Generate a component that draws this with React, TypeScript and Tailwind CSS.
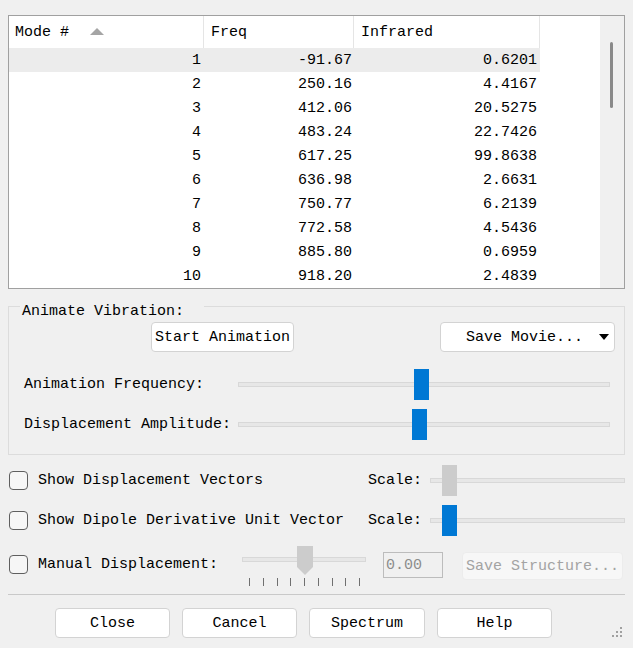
import React from 'react';

const modes = [
  { id: 1, freq: '-91.67', ir: '0.6201' },
  { id: 2, freq: '250.16', ir: '4.4167' },
  { id: 3, freq: '412.06', ir: '20.5275' },
  { id: 4, freq: '483.24', ir: '22.7426' },
  { id: 5, freq: '617.25', ir: '99.8638' },
  { id: 6, freq: '636.98', ir: '2.6631' },
  { id: 7, freq: '750.77', ir: '6.2139' },
  { id: 8, freq: '772.58', ir: '4.5436' },
  { id: 9, freq: '885.80', ir: '0.6959' },
  { id: 10, freq: '918.20', ir: '2.4839' },
];

const Checkbox = () => (
  <div className="w-[19px] h-[19px] shrink-0 rounded-[4px] border border-[#5f5f5f] bg-[#f6f6f6]" />
);

// horizontal slider: thin track with a rectangular handle
const Slider = ({ handle, blue }: { handle: string; blue?: boolean }) => (
  <div className="relative h-[31px] flex-1">
    <div className="absolute left-0 right-0 top-[13px] h-[5px] border border-[#d8d8d8] bg-[#e7e7e7]" />
    <div className={`absolute top-0 h-[31px] w-[15px] ${handle} ${blue ? 'bg-[#0078d4]' : 'bg-[#cccccc]'}`} />
  </div>
);

const Button = ({ children, className }: { children: React.ReactNode; className: string }) => (
  <button className={`h-[30px] rounded-[4px] border border-[#d3d3d3] bg-white text-black ${className}`}>
    {children}
  </button>
);

export default function App() {
  return (
    <div className="w-[633px] h-[648px] bg-[#f0f0f0] px-2 pt-[15px] font-['Liberation_Mono',monospace] text-[15px] leading-[17px] text-black overflow-hidden">
      {/* Modes table */}
      <div className="flex h-[274px] border border-[#a0a0a0] bg-white">
        <div className="w-[591px]">
          <div className="flex h-[32px]">
            <div className="relative flex w-[195px] items-center border-r border-[#e5e5e5] pl-[6px]">
              Mode #
              <svg className="absolute left-[81px] top-[12px]" width="14" height="7" viewBox="0 0 14 7">
                <polygon points="0,7 7,0 14,7" fill="#a5a5a5" />
              </svg>
            </div>
            <div className="flex w-[150px] items-center border-r border-[#e5e5e5] pl-[7px]">Freq</div>
            <div className="flex w-[186px] items-center border-r border-[#e5e5e5] pl-[7px]">Infrared</div>
            <div className="flex-1" />
          </div>
          {modes.map((m) => (
            <div key={m.id} className="flex h-[24px] items-center">
              <div className={`flex h-full w-[531px] items-center ${m.id === 1 ? 'bg-[#ececec]' : ''}`}>
                <div className="w-[195px] pr-[3px] text-right">{m.id}</div>
                <div className="w-[150px] pr-[2px] text-right">{m.freq}</div>
                <div className="w-[186px] pr-[3px] text-right">{m.ir}</div>
              </div>
            </div>
          ))}
        </div>
        <div className="w-[24px] bg-[#f0f0f0] pl-[10px] pt-[26px]">
          <div className="h-[66px] w-[3px] rounded-full bg-[#8a8a8a]" />
        </div>
      </div>

      {/* Animate Vibration group */}
      <div className="relative mt-[17px] h-[149px] border border-[#dcdcdc] pt-[15px]">
        <div className="absolute left-[11px] top-[-4px] bg-[#f0f0f0] pl-[2px] pr-[20px]">Animate Vibration:</div>
        <div className="flex">
          <Button className="ml-[142px] w-[143px]">Start Animation</Button>
          <button className="ml-[146px] flex h-[30px] w-[175px] items-center rounded-[4px] border border-[#d3d3d3] bg-white pl-[25px] pr-[5px]">
            <span className="flex-1 text-left">Save Movie...</span>
            <svg width="10" height="6" viewBox="0 0 10 6">
              <polygon points="0,0 10,0 5,6" fill="#000" />
            </svg>
          </button>
        </div>
        <div className="mt-[17px] flex items-center pl-[15px] pr-[14px]">
          <div className="w-[214px]">Animation Frequency:</div>
          <Slider handle="left-[176px]" blue />
        </div>
        <div className="mt-[9px] flex items-center pl-[15px] pr-[14px]">
          <div className="w-[214px]">Displacement Amplitude:</div>
          <Slider handle="left-[174px]" blue />
        </div>
      </div>

      {/* Display options */}
      <div className="mt-[10px] flex items-center">
        <div className="flex w-[360px] items-center pl-[1px]">
          <Checkbox />
          <span className="ml-[10px]">Show Displacement Vectors</span>
        </div>
        <div className="w-[62px]">Scale:</div>
        <Slider handle="left-[12px]" />
      </div>
      <div className="mt-[9px] flex items-center">
        <div className="flex w-[360px] items-center pl-[1px]">
          <Checkbox />
          <span className="ml-[10px]">Show Dipole Derivative Unit Vector</span>
        </div>
        <div className="w-[62px]">Scale:</div>
        <Slider handle="left-[12px]" blue />
      </div>

      <div className="mt-[9px] flex h-[42px] items-start">
        <div className="mt-[10px] flex w-[234px] items-center pl-[1px]">
          <Checkbox />
          <span className="ml-[10px]">Manual Displacement:</span>
        </div>
        <div className="relative h-[42px] w-[124px]">
          <div className="absolute left-0 right-0 top-[12px] h-[5px] border border-[#d8d8d8] bg-[#e7e7e7]" />
          <svg className="absolute left-[55px] top-[1px]" width="16" height="29" viewBox="0 0 16 29">
            <polygon points="0,0 16,0 16,21 8,29 0,21" fill="#cccccc" />
          </svg>
          <div className="absolute left-0 right-0 top-[33px] flex justify-between pl-[7px] pr-[6px]">
            {Array.from({ length: 9 }).map((_, i) => (
              <div key={i} className="h-[8px] w-px bg-[#707070]" />
            ))}
          </div>
        </div>
        <div className="ml-[17px] mt-[7px] flex h-[26px] w-[60px] items-center border border-[#bcbcbc] pl-[2px] text-[#8c8c8c]">
          0.00
        </div>
        <div className="ml-[19px] mt-[7px] flex h-[28px] w-[161px] items-center justify-center rounded-[4px] border border-[#ececec] bg-[#f7f7f7] text-[#a3a3a3]">
          Save Structure...
        </div>
      </div>

      <div className="mt-[7px] h-px bg-[#c9c9c9]" />

      {/* Dialog buttons */}
      <div className="relative mt-[13px] flex gap-[12px] pl-[47px]">
        <Button className="w-[115px]">Close</Button>
        <Button className="w-[115px]">Cancel</Button>
        <Button className="w-[116px]">Spectrum</Button>
        <Button className="w-[115px]">Help</Button>
        <svg className="absolute right-[2px] top-[18px]" width="13" height="13" viewBox="0 0 13 13">
          {[
            [10, 1], [6, 5], [10, 5], [2, 9], [6, 9], [10, 9],
          ].map(([x, y], i) => (
            <rect key={i} x={x} y={y} width="2" height="2" fill="#a0a0a0" />
          ))}
        </svg>
      </div>
    </div>
  );
}
